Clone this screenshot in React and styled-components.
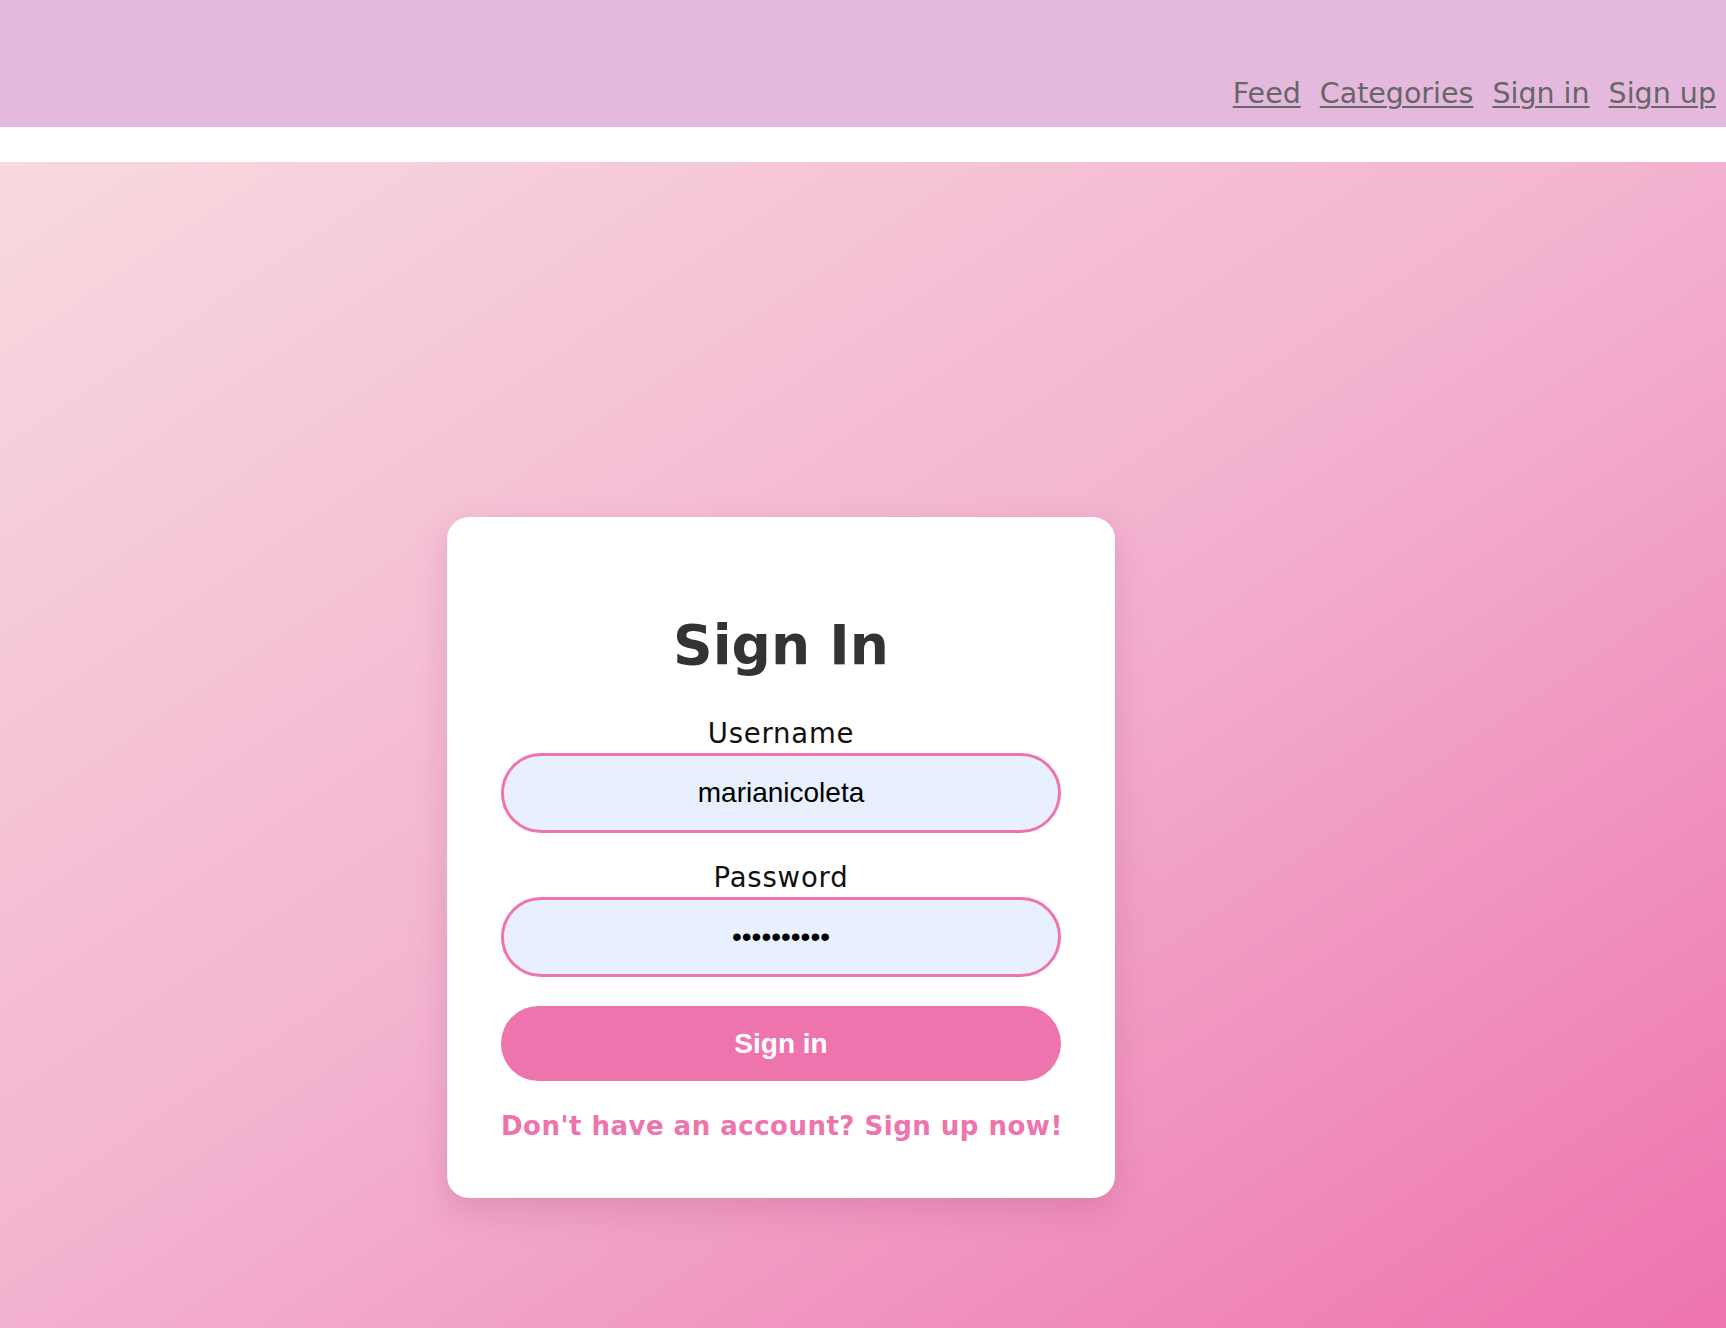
import React from "react"
import styled, { createGlobalStyle } from "styled-components"

const GlobalStyle = createGlobalStyle`
  html, body {
    margin: 0;
    padding: 0;
    background: #ffffff;
  }
  * {
    box-sizing: border-box;
  }
`

const NavBar = styled.nav`
  height: 127px;
  background: #e5b9dd;
  display: flex;
  justify-content: flex-end;
  align-items: flex-end;
  gap: 19px;
  padding: 0 10px 17px 0;
  margin-bottom: 35px;
`

const NavLink = styled.a`
  font-family: "DejaVu Sans", sans-serif;
  font-size: 28.5px;
  line-height: 33px;
  color: #666666;
  text-decoration: underline;
  text-underline-offset: 3px;
  text-decoration-thickness: 2px;
  cursor: pointer;
`

const Main = styled.main`
  min-height: 1166px;
  background: linear-gradient(to bottom right, #f8d9df 0%, #f3b2cf 50%, #ee74ae 100%);
  display: flex;
  align-items: flex-start;
  padding: 355px 0 0 447px;
`

const Card = styled.div`
  width: 668px;
  background: #ffffff;
  border-radius: 22px;
  box-shadow: 0 12px 32px rgba(160, 60, 110, 0.22);
  padding: 95px 54px 57px;
  display: flex;
  flex-direction: column;
  align-items: stretch;
`

const Title = styled.h1`
  margin: 0 0 40px;
  font-family: "DejaVu Sans", sans-serif;
  font-weight: 700;
  font-size: 55px;
  line-height: 66px;
  color: #333333;
  text-align: center;
`

const Label = styled.label`
  display: block;
  font-family: "DejaVu Sans", sans-serif;
  font-size: 27.5px;
  letter-spacing: 0.8px;
  line-height: 30px;
  color: #111111;
  text-align: center;
  margin: ${p => (p.$first ? "0" : "29px")} 0 5px;
`

const Field = styled.input`
  display: block;
  width: 100%;
  height: 80px;
  border: 3px solid #ee74ae;
  border-radius: 40px;
  background: #e8f0fe;
  font-family: "Liberation Sans", Arial, sans-serif;
  font-size: 28px;
  color: #000000;
  text-align: center;
  outline: none;
`

const SubmitButton = styled.button`
  margin-top: 29px;
  height: 75px;
  border: none;
  border-radius: 38px;
  background: #ee74ae;
  color: #ffffff;
  font-family: "Liberation Sans", Arial, sans-serif;
  font-weight: 700;
  font-size: 28px;
  cursor: pointer;
`

const SignUpLink = styled.a`
  margin-top: 30px;
  font-family: "DejaVu Sans", sans-serif;
  font-weight: 700;
  font-size: 26px;
  letter-spacing: 0.5px;
  line-height: 30px;
  color: #ee74ae;
  text-align: center;
  white-space: nowrap;
  cursor: pointer;
`

export default function App() {
  return (
    <>
      <GlobalStyle />
      <NavBar>
        <NavLink>Feed</NavLink>
        <NavLink>Categories</NavLink>
        <NavLink>Sign in</NavLink>
        <NavLink>Sign up</NavLink>
      </NavBar>
      <Main>
        <Card>
          <Title>Sign In</Title>
          <Label $first htmlFor="username">Username</Label>
          <Field id="username" type="text" defaultValue="marianicoleta" />
          <Label htmlFor="password">Password</Label>
          <Field id="password" type="password" defaultValue="mypassword" />
          <SubmitButton type="button">Sign in</SubmitButton>
          <SignUpLink>Don't have an account? Sign up now!</SignUpLink>
        </Card>
      </Main>
    </>
  )
}
